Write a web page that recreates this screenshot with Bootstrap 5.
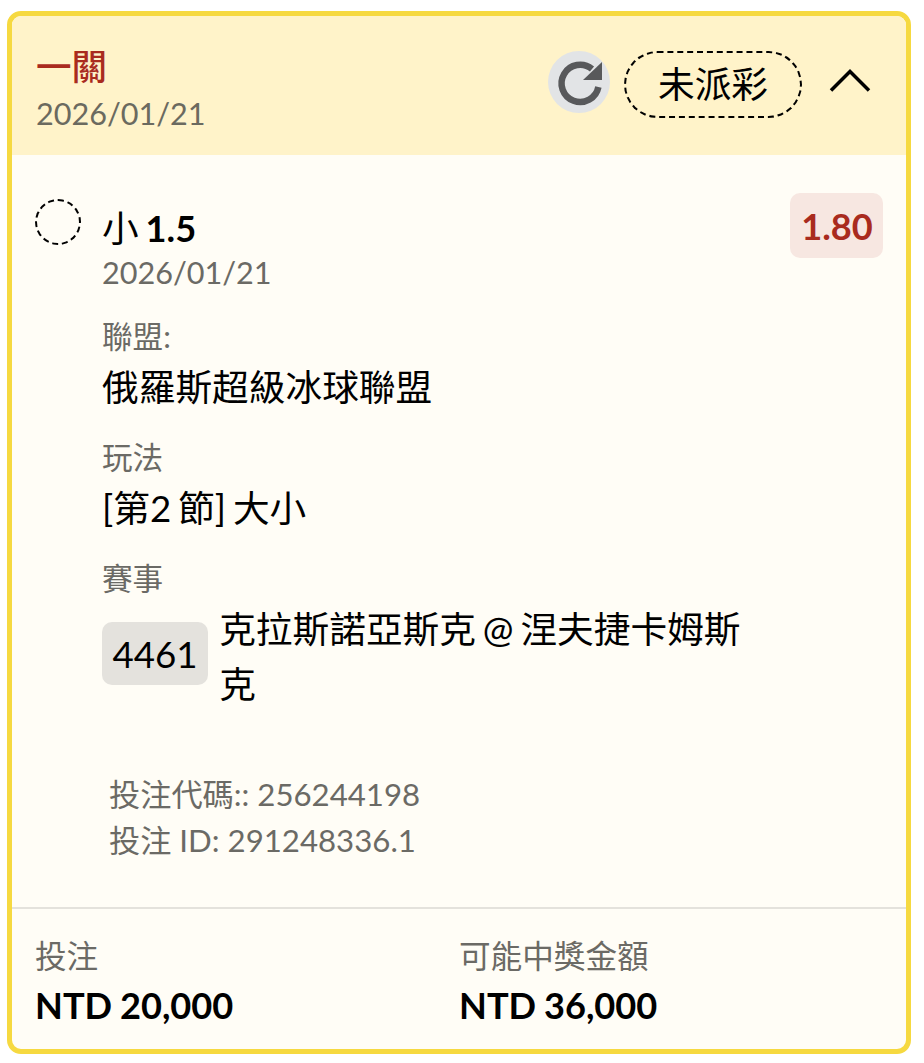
<!DOCTYPE html>
<html lang="zh-Hant">
<head>
  <meta charset="UTF-8" />
  <meta name="viewport" content="width=device-width, initial-scale=1.0"/>
  <title>一關</title>
  <link href="https://cdn.jsdelivr.net/npm/bootstrap@5.3.0/dist/css/bootstrap.min.css" rel="stylesheet"/>
  <style>
    body {
      background: #fff;
      font-family: Lato, "Noto Sans CJK TC", sans-serif;
      color: #000;
      padding: 11px 13px 9px 7px;
      word-spacing: -2.5px;
    }
    .bet-card {
      height: 1043px;
      border: 5px solid #f6d940;
      border-radius: 14px;
      background: #fffdf6;
      overflow: hidden;
    }
    .bet-head {
      height: 139px;
      background: #fff3c9;
      padding: 29px 34px 0 24px;
    }
    .bet-title { font-size: 35.5px; line-height: 44px; font-weight: 500; color: #a92b1e; }
    .muted-date { font-size: 30.6px; line-height: 36px; color: #6b6a5f; }
    .head-date { margin-top: 7px; }
    .pick-date { margin-top: 5px; margin-bottom: -3px; color: #6b6a65; }
    .head-tools { margin-top: 6px; }
    .refresh-btn { width: 62px; height: 62px; background: #e2e4e6; }
    .status-pill {
      width: 178px;
      height: 67px;
      border: 2px dashed #000;
      border-radius: 34px;
      font-size: 36.7px;
      margin-left: 14px;
    }
    .bet-main { padding: 38px 23px 0 23px; }
    .dash-dot { width: 46px; height: 46px; border: 2px dashed #000; border-radius: 50%; margin-top: 6px; }
    .bet-text { margin-left: 21px; }
    .pick-name { font-size: 36.7px; line-height: 44px; padding-top: 13px; }
    .pick-name b, .odds-tag { font-size: 36.2px; }
    .odds-tag { width: 93px; height: 65px; padding: 2px 0 0 1px; background: #f7e7e1; color: #a92b1e; font-weight: 700; border-radius: 10px; }
    .info-label { font-size: 30.6px; line-height: 37px; color: #6b6a65; margin-top: 30px; }
    .info-value { font-size: 36.7px; line-height: 44px; margin-top: 10px; }
    .game-row { margin-top: 5px; }
    .game-no { background: #e4e2dd; border-radius: 10px; font-size: 36.7px; padding: 3px 10.5px 0; height: 63px; flex: none; margin-bottom: 8px; }
    .game-name { font-size: 36.7px; line-height: 55px; margin-left: 11px; width: 535px; }
    .bet-codes { font-size: 31.2px; line-height: 46px; color: #6b6a65; padding: 59px 0 0 97px; word-spacing: 0; }
    .bet-foot { border-top: 2px solid #e4e2dc; margin-top: 44px; padding: 27px 23px 0; }
    .foot-col { width: 424px; }
    .foot-label { font-size: 31.6px; line-height: 40px; color: #6b6a65; }
    .foot-amount { font-size: 36.2px; line-height: 44px; font-weight: 700; margin-top: 7px; word-spacing: -1px; }
  </style>
</head>
<body>

<div class="bet-card">
  <div class="bet-head d-flex justify-content-between">
    <div>
      <div class="bet-title">一關</div>
      <div class="muted-date head-date">2026/01/21</div>
    </div>
    <div class="head-tools d-flex align-items-start">
      <div class="refresh-btn rounded-circle">
        <svg class="d-block" width="62" height="62" viewBox="0 0 62 62">
          <path d="M50.4 36A18.6 18.6 0 1 1 44 18" fill="none" stroke="#58595b" stroke-width="6.5"/>
          <path d="M54 11V29H35z" fill="#58595b"/>
        </svg>
      </div>
      <div class="status-pill d-flex align-items-center justify-content-center">未派彩</div>
      <svg class="ms-4" width="46" height="64" viewBox="0 0 46 64">
        <path d="M5 39.500L24 20.500L43 39.500" fill="none" stroke="#000" stroke-width="3.5"/>
      </svg>
    </div>
  </div>

  <div class="bet-main d-flex align-items-start">
    <div class="dash-dot flex-shrink-0"></div>
    <div class="bet-text flex-grow-1">
      <div class="pick-name">小 <b>1.5</b></div>
      <div class="muted-date pick-date">2026/01/21</div>
      <div class="info-label">聯盟:</div>
      <div class="info-value">俄羅斯超級冰球聯盟</div>
      <div class="info-label">玩法</div>
      <div class="info-value">[第2 節] 大小</div>
      <div class="info-label">賽事</div>
      <div class="game-row d-flex align-items-center">
        <div class="game-no d-flex align-items-center">4461</div>
        <div class="game-name">克拉斯諾亞斯克 @ 涅夫捷卡姆斯克</div>
      </div>
    </div>
    <div class="odds-tag d-flex align-items-center justify-content-center flex-shrink-0">1.80</div>
  </div>

  <div class="bet-codes">
    <div>投注代碼:: 256244198</div>
    <div>投注 ID: 291248336.1</div>
  </div>

  <div class="bet-foot d-flex">
    <div class="foot-col">
      <div class="foot-label">投注</div>
      <div class="foot-amount">NTD 20,000</div>
    </div>
    <div class="foot-col">
      <div class="foot-label">可能中獎金額</div>
      <div class="foot-amount">NTD 36,000</div>
    </div>
  </div>
</div>

</body>
</html>
